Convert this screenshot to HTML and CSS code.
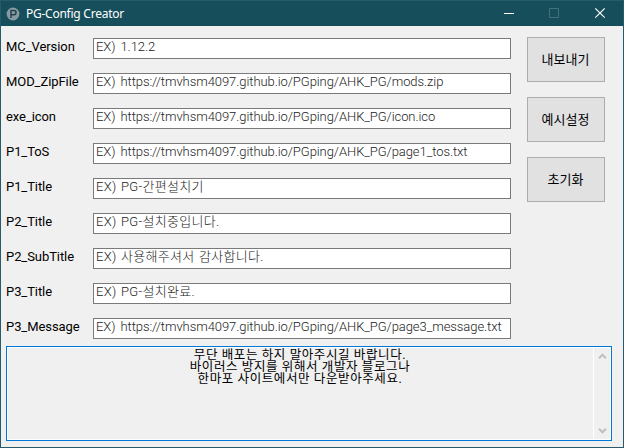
FILE: index.html
```html
<!DOCTYPE html>
<html lang="ko">
<head>
<meta charset="utf-8">
<title>PG-Config Creator</title>
<link rel="stylesheet" href="styles.css">
</head>
<body>
<div class="window">
  <header class="titlebar">
    <svg class="app-icon" width="14" height="14" viewBox="0 0 14 14"><circle cx="7" cy="7" r="6.4" fill="#869ba3"/><path d="M5 11V3.5H8Q10 3.5 10 5.6T8 7.8H5" fill="none" stroke="#29434c" stroke-width="1.5"/></svg>
    <h1 class="title">PG-Config Creator</h1>
    <div class="controls">
      <svg width="46" height="25" viewBox="0 0 46 25"><path d="M18 12.5h10" stroke="#fff"/></svg>
      <svg width="45" height="25" viewBox="0 0 45 25"><path d="M17.5 7.500h9v9h-9z" fill="none" stroke="#45717d"/></svg>
      <svg width="46" height="25" viewBox="0 0 46 25"><path d="M18.300 7.300l9.400 9.400M27.700 7.300l-9.400 9.400" stroke="#fff" stroke-width="1.200"/></svg>
    </div>
  </header>
  <main class="content">
    <section class="top">
      <div class="fields">
        <div class="row"><span class="label">MC_Version</span><div class="input">EX) 1.12.2</div></div>
        <div class="row"><span class="label">MOD_ZipFile</span><div class="input">EX) https://tmvhsm4097.github.io/PGping/AHK_PG/mods.zip</div></div>
        <div class="row"><span class="label">exe_icon</span><div class="input">EX) https://tmvhsm4097.github.io/PGping/AHK_PG/icon.ico</div></div>
        <div class="row"><span class="label">P1_ToS</span><div class="input">EX) https://tmvhsm4097.github.io/PGping/AHK_PG/page1_tos.txt</div></div>
        <div class="row"><span class="label">P1_Title</span><div class="input korean">EX) PG-간편설치기</div></div>
        <div class="row"><span class="label">P2_Title</span><div class="input korean">EX) PG-설치중입니다.</div></div>
        <div class="row"><span class="label">P2_SubTitle</span><div class="input korean">EX) 사용해주셔서 감사합니다.</div></div>
        <div class="row"><span class="label">P3_Title</span><div class="input korean">EX) PG-설치완료.</div></div>
        <div class="row"><span class="label">P3_Message</span><div class="input">EX) https://tmvhsm4097.github.io/PGping/AHK_PG/page3_message.txt</div></div>
      </div>
      <div class="actions">
        <button>내보내기</button>
        <button>예시설정</button>
        <button>초기화</button>
      </div>
    </section>
    <section class="notice">
      <div class="message">
        <p>무단 배포는 하지 말아주시길 바랍니다.</p>
        <p>바이러스 방지를 위해서 개발자 블로그나</p>
        <p>한마포 사이트에서만 다운받아주세요.</p>
      </div>
      <div class="scrollbar">
        <svg width="9" height="8" viewBox="0 0 9 8"><path d="M1 6.200L4.500 2.700L8 6.200" fill="none" stroke="#bfbfbf" stroke-width="2"/></svg>
        <svg width="9" height="8" viewBox="0 0 9 8"><path d="M1 1.800L4.500 5.300L8 1.800" fill="none" stroke="#bfbfbf" stroke-width="2"/></svg>
      </div>
    </section>
  </main>
</div>
</body>
</html>
```
FILE: styles.css
```css
* { box-sizing: border-box; }
body, h1, p { margin: 0; }
body {
  font-family: Roboto, "Noto Sans CJK KR", sans-serif;
  font-size: 13px;
  font-weight: 300;
  color: #000;
}
.window {
  width: 624px;
  height: 448px;
  border: 1px solid #275b6b;
  background: #f0f0f0;
  overflow: hidden;
}
.titlebar {
  display: flex;
  align-items: center;
  height: 25px;
  padding-left: 5px;
  background: #174e5c;
  color: #fff;
}
.title {
  flex: 1;
  margin-left: 6px;
  font: 400 12px/24px "Noto Sans", sans-serif;
  letter-spacing: -0.25px;
}
.controls { display: flex; }
.content { padding: 11px 11px 0 5px; }
.top { display: flex; gap: 16px; }
.fields {
  display: flex;
  flex-direction: column;
  gap: 14px;
  padding-top: 1px;
}
.row { display: flex; height: 21px; }
.label {
  width: 87px;
  line-height: 18px;
  font-weight: 400;
  letter-spacing: -0.07px;
  white-space: nowrap;
}
.input {
  width: 418px;
  padding-left: 2px;
  border: 1px solid #7a7a7a;
  background: #fff;
  color: #222;
  line-height: 15px;
  letter-spacing: -0.07px;
  word-spacing: 2px;
  white-space: nowrap;
}
.korean {
  letter-spacing: 0.3px;
  word-spacing: 1px;
}
.actions {
  display: flex;
  flex-direction: column;
  gap: 15px;
}
button {
  width: 78px;
  height: 45px;
  padding: 0 1px 2px 0;
  border: 1px solid #adadad;
  background: #e1e1e1;
  color: #000;
  font: 400 13px "Noto Sans CJK KR", sans-serif;
}
.notice {
  display: flex;
  width: 606px;
  height: 95px;
  margin-top: 7px;
  border: 1px solid #0078d7;
  box-shadow: inset 0 0 0 1px #fff;
}
.message {
  flex: 1;
  padding-top: 2px;
  text-align: center;
  font-weight: 400;
  font-size: 12.5px;
  line-height: 12px;
  letter-spacing: 0.6px;
}
.scrollbar {
  display: flex;
  flex-direction: column;
  justify-content: space-between;
  align-items: center;
  width: 18px;
  padding: 5px 1px 5px 0;
  border-left: 1px solid #fff;
}
```
